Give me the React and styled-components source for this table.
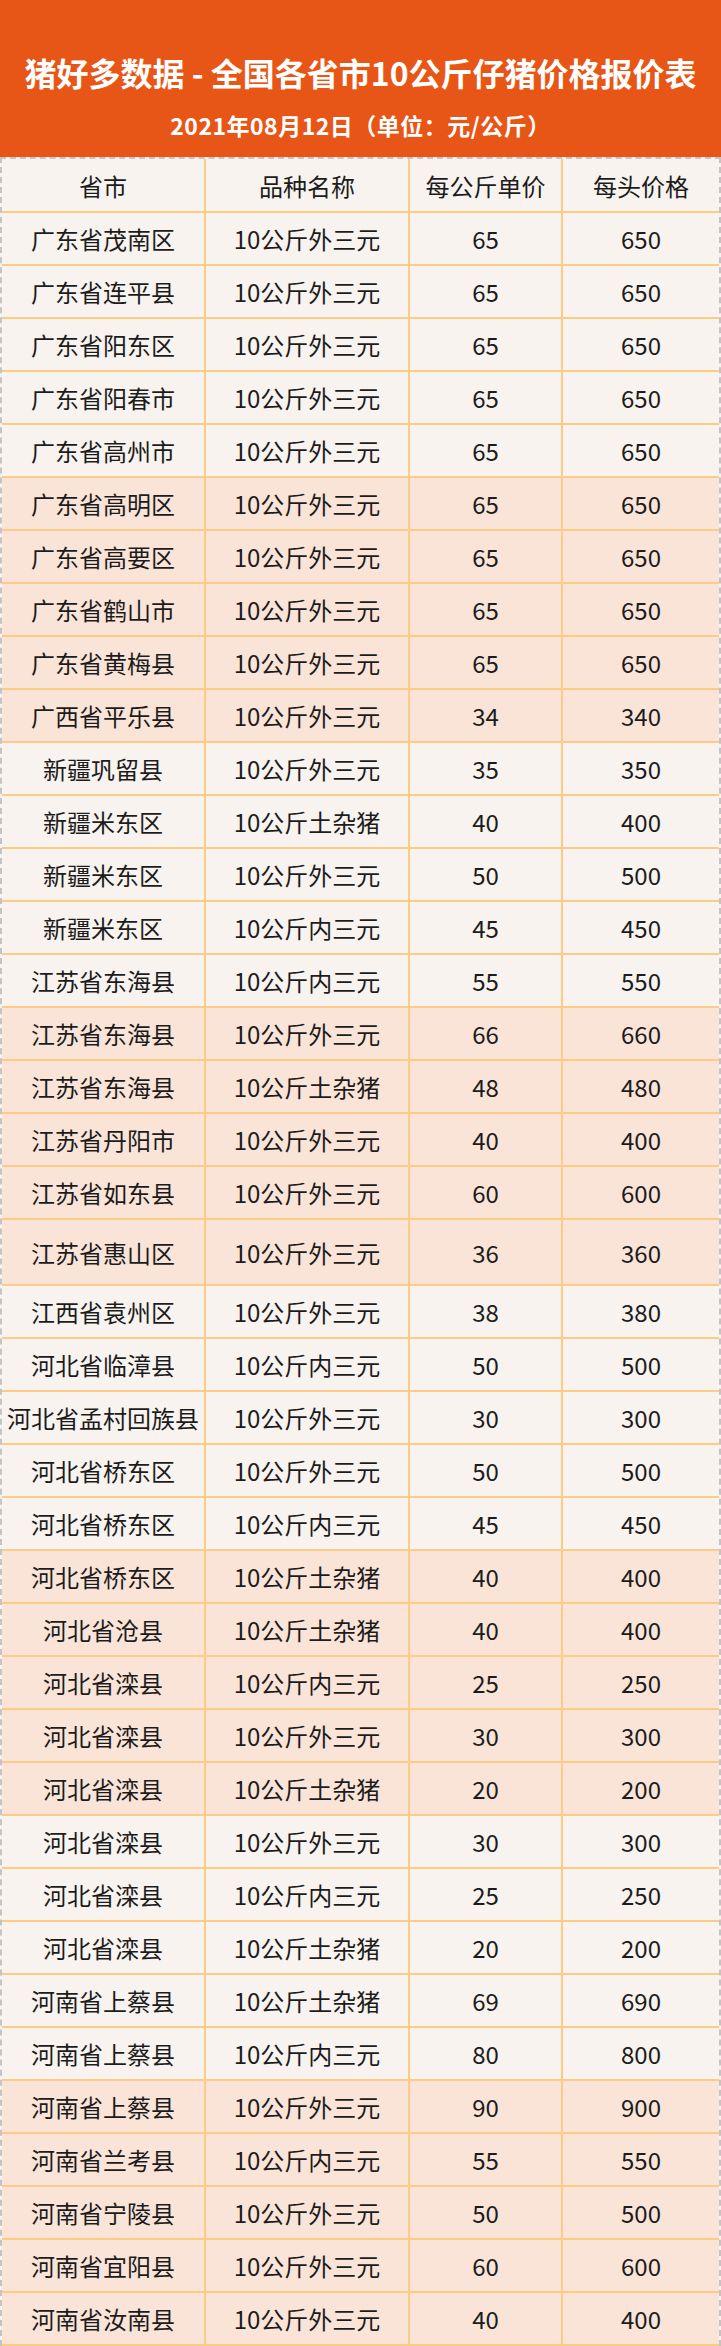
import React from 'react';
import styled, { createGlobalStyle } from 'styled-components';

const rows = [
    ['广东省茂南区', '10公斤外三元', 65, 650],
    ['广东省连平县', '10公斤外三元', 65, 650],
    ['广东省阳东区', '10公斤外三元', 65, 650],
    ['广东省阳春市', '10公斤外三元', 65, 650],
    ['广东省高州市', '10公斤外三元', 65, 650],
    ['广东省高明区', '10公斤外三元', 65, 650],
    ['广东省高要区', '10公斤外三元', 65, 650],
    ['广东省鹤山市', '10公斤外三元', 65, 650],
    ['广东省黄梅县', '10公斤外三元', 65, 650],
    ['广西省平乐县', '10公斤外三元', 34, 340],
    ['新疆巩留县', '10公斤外三元', 35, 350],
    ['新疆米东区', '10公斤土杂猪', 40, 400],
    ['新疆米东区', '10公斤外三元', 50, 500],
    ['新疆米东区', '10公斤内三元', 45, 450],
    ['江苏省东海县', '10公斤内三元', 55, 550],
    ['江苏省东海县', '10公斤外三元', 66, 660],
    ['江苏省东海县', '10公斤土杂猪', 48, 480],
    ['江苏省丹阳市', '10公斤外三元', 40, 400],
    ['江苏省如东县', '10公斤外三元', 60, 600],
    ['江苏省惠山区', '10公斤外三元', 36, 360],
    ['江西省袁州区', '10公斤外三元', 38, 380],
    ['河北省临漳县', '10公斤内三元', 50, 500],
    ['河北省孟村回族县', '10公斤外三元', 30, 300],
    ['河北省桥东区', '10公斤外三元', 50, 500],
    ['河北省桥东区', '10公斤内三元', 45, 450],
    ['河北省桥东区', '10公斤土杂猪', 40, 400],
    ['河北省沧县', '10公斤土杂猪', 40, 400],
    ['河北省滦县', '10公斤内三元', 25, 250],
    ['河北省滦县', '10公斤外三元', 30, 300],
    ['河北省滦县', '10公斤土杂猪', 20, 200],
    ['河北省滦县', '10公斤外三元', 30, 300],
    ['河北省滦县', '10公斤内三元', 25, 250],
    ['河北省滦县', '10公斤土杂猪', 20, 200],
    ['河南省上蔡县', '10公斤土杂猪', 69, 690],
    ['河南省上蔡县', '10公斤内三元', 80, 800],
    ['河南省上蔡县', '10公斤外三元', 90, 900],
    ['河南省兰考县', '10公斤内三元', 55, 550],
    ['河南省宁陵县', '10公斤外三元', 50, 500],
    ['河南省宜阳县', '10公斤外三元', 60, 600],
    ['河南省汝南县', '10公斤外三元', 40, 400],
];

const App = () => {
    return (
        <>
            <GlobalStyle />
            <Page>
                <Header>
                    <Title>猪好多数据 - 全国各省市10公斤仔猪价格报价表</Title>
                    <SubTitle>2021年08月12日（单位：元/公斤）</SubTitle>
                </Header>
                <Table>
                    <HeadRow>
                        <Cell>省市</Cell>
                        <Cell>品种名称</Cell>
                        <Cell>每公斤单价</Cell>
                        <Cell>每头价格</Cell>
                    </HeadRow>
                    {rows.map((row, idx) => {
                        // every 5 rows the background switches colour
                        return (
                            <Row key={idx} $pink={Math.floor(idx / 5) % 2 === 1} $tall={idx === 19}>
                                {row.map((value, i) => (
                                    <Cell key={i}>{value}</Cell>
                                ))}
                            </Row>
                        );
                    })}
                </Table>
            </Page>
        </>
    );
}

const GlobalStyle = createGlobalStyle`
    body {
        margin: 0;
        background: #f8f3ef;
        font-family: "Noto Sans CJK SC", "Noto Sans", sans-serif;
    }
`;

const Page = styled.div`
    width: 721px;
`;

const Header = styled.div`
    height: 157px;
    background: #e85617;
    color: #fff;
    display: flex;
    flex-direction: column;
    align-items: center;
    font-weight: bold;
`;

const Title = styled.div`
    margin-top: 52px;
    font-size: 32px;
    line-height: 40px;
    white-space: nowrap;
`;

const SubTitle = styled.div`
    margin-top: 18px;
    font-size: 23px;
    line-height: 30px;
    letter-spacing: 0.5px;
`;

const Table = styled.div`
    border-top: 2px dashed #c4c4c4;
    border-left: 2px dashed #c4c4c4;
    border-right: 2px dashed #c4c4c4;
`;

const Row = styled.div`
    display: grid;
    grid-template-columns: 202px 204px 153px 1fr;
    height: ${props => (props.$tall ? 64 : 51)}px;
    border-bottom: 2px solid #fdcb84;
    background: ${props => (props.$pink ? '#fae4d8' : '#f8f3ef')};
`;

const HeadRow = styled(Row)`
    height: 52px;
`;

const Cell = styled.div`
    display: flex;
    align-items: center;
    justify-content: center;
    font-size: 24px;
    color: #1c1c1c;
    white-space: nowrap;
    & + & {
        border-left: 2px solid #fdcb84;
    }
`;

export default App;
